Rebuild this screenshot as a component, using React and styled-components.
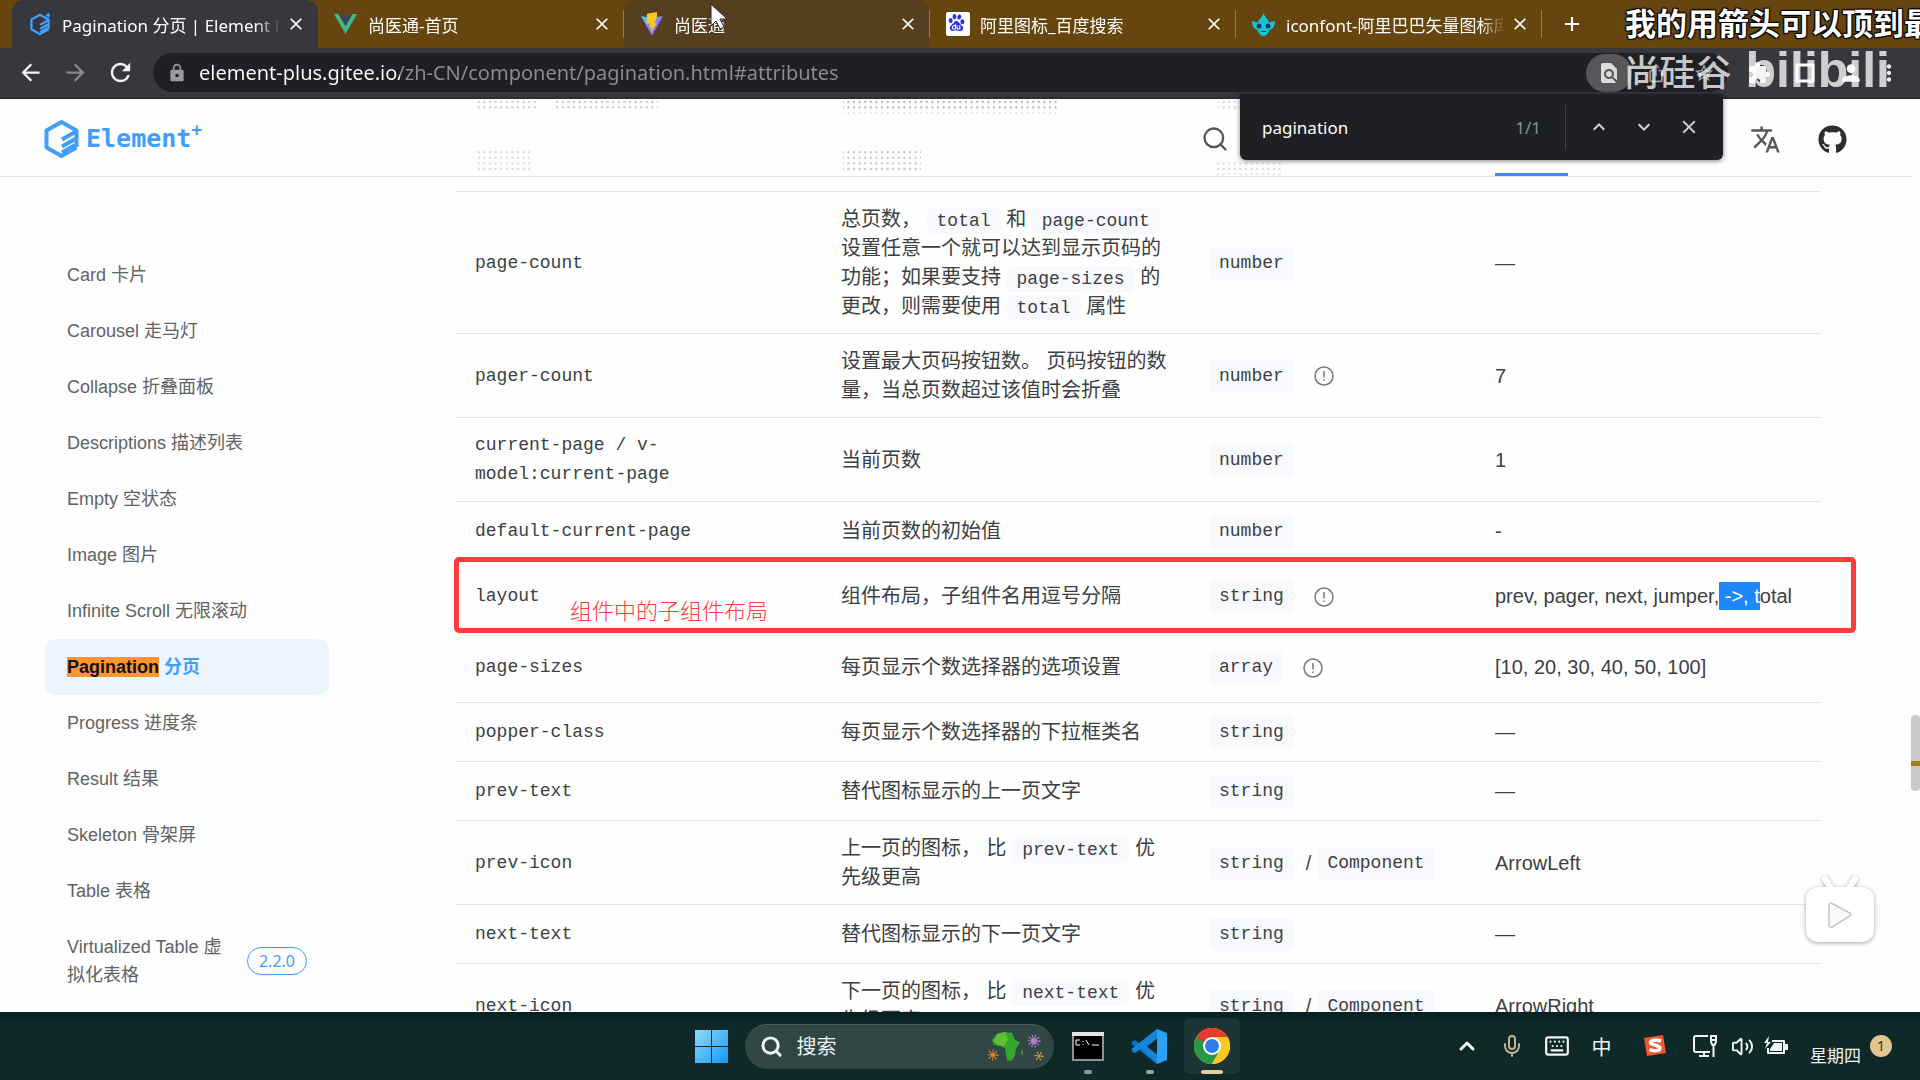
import React from 'react';
import styled, { createGlobalStyle } from 'styled-components';
import {
    MdAdd,
    MdArrowBack,
    MdArrowForward,
    MdClose,
    MdExtension,
    MdFindInPage,
    MdIosShare,
    MdKeyboardArrowDown,
    MdKeyboardArrowUp,
    MdLock,
    MdMoreVert,
    MdPerson,
    MdRefresh,
    MdStarBorder,
    MdTranslate,
} from 'react-icons/md';
import { FaGithub } from 'react-icons/fa';
import { SiBaidu } from 'react-icons/si';
import { ChevronUp, Keyboard, Mic, Search, Volume2 } from 'lucide-react';

const sans = '"Liberation Sans", "Noto Sans CJK SC", sans-serif';
const ui = '"Noto Sans", "Noto Sans CJK SC", sans-serif';
const mono = '"Liberation Mono", "Noto Sans CJK SC", monospace';

const GlobalStyle = createGlobalStyle`
    * {
        box-sizing: border-box;
    }

    body {
        margin: 0;
        overflow: hidden;
        font-family: ${sans};
        color: #3c3f44;
    }

    button {
        padding: 0;
        border: 0;
        background: none;
        color: inherit;
        font: inherit;
    }

    input {
        min-width: 0;
        padding: 0;
        border: 0;
        outline: 0;
        background: none;
        font: inherit;
    }

    a {
        color: inherit;
        text-decoration: none;
    }
`;

const Screen = styled.div`
    display: flex;
    flex-direction: column;
    height: 100vh;
    overflow: hidden;
    position: relative;
    background: #fefefe;
`;

/* browser chrome */

const TabStrip = styled.nav`
    display: flex;
    flex: none;
    height: 48px;
    padding-left: 12px;
    background: #67450f;
    color: #fff;
    font-family: ${ui};
    font-size: 17px;
`;

const Tab = styled.div`
    display: flex;
    align-items: center;
    flex: 0 1 306px;
    min-width: 0;
    padding: 0 12px 0 15px;
    border-radius: 12px 12px 0 0;
    background: ${props => props.$active ? '#37383d' : props.$hovered ? '#563f1e' : 'transparent'};
`;

const TabDivider = styled.div`
    align-self: center;
    width: 1px;
    height: 28px;
    margin-left: -1px;
    background: #957b53;
`;

const TabTitle = styled.button`
    display: flex;
    align-items: center;
    gap: 10px;
    flex: 1;
    min-width: 0;
    overflow: hidden;
    white-space: nowrap;
    mask-image: linear-gradient(to right, #000 88%, transparent 98%);
`;

const TabIcon = styled.span`
    display: flex;
    flex: none;
    width: 25px;
    justify-content: center;
`;

const IconButton = styled.button`
    display: flex;
    align-items: center;
    justify-content: center;
    flex: none;
    width: ${props => props.$width || 24}px;
    height: ${props => props.$width || 24}px;
    color: ${props => props.$color || 'inherit'};
    font-size: ${props => props.$size || 20}px;
`;

const NewTab = styled(IconButton)`
    align-self: center;
    margin-left: 18px;
`;

const Toolbar = styled.div`
    display: flex;
    align-items: center;
    flex: none;
    height: 51px;
    padding: 0 16px 0 8px;
    background: #37383d;
    color: #f4f4f4;
    border-bottom: 2px solid #2b2c30;
`;

const Omnibox = styled.div`
    display: flex;
    align-items: center;
    flex: 1;
    height: 39px;
    margin: 0 8px 0 10px;
    padding-left: 14px;
    border-radius: 20px;
    background: #1f2023;
    color: #9a9c9f;
`;

const Address = styled.input`
    flex: 1;
    margin-left: 12px;
    font-family: ${ui};
    font-size: 20px;
    color: transparent;
    background: linear-gradient(to right, #fff 201px, #8b8d90 201px);
    background-clip: text;
    -webkit-background-clip: text;
`;

const FindBadge = styled.span`
    display: flex;
    align-items: center;
    justify-content: center;
    width: 46px;
    height: 38px;
    border-radius: 19px;
    background: #55575a;
    color: #dcdcdc;
`;

const FindBar = styled.form`
    position: absolute;
    top: 94px;
    right: 197px;
    display: flex;
    align-items: center;
    width: 483px;
    height: 66px;
    padding: 0 22px;
    border-radius: 0 0 6px 6px;
    background: #1f2023;
    box-shadow: 0 1px 5px rgba(0, 0, 0, 0.5);
    color: #d4d4d4;
    font-family: ${ui};
    font-size: 17px;
`;

const FindInput = styled.input`
    flex: 1;
    color: #fff;
`;

const FindCount = styled.span`
    padding-right: 24px;
    color: #8e9093;
`;

const FindActions = styled.div`
    display: flex;
    align-items: center;
    gap: 21px;
    height: 45px;
    padding-left: 21px;
    border-left: 1px solid #3f4144;
`;

/* documentation page */

const Viewport = styled.div`
    display: flex;
    flex: 1;
    min-height: 0;
    overflow: hidden;
`;

const Page = styled.div`
    flex: 1;
    min-width: 0;
`;

const Header = styled.header`
    position: relative;
    display: flex;
    align-items: center;
    height: 78px;
    padding: 3px 64px 0 44px;
    border-bottom: 1px solid #dfe0e3;
    overflow: hidden;
`;

const Dots = styled.svg`
    position: absolute;
    inset: 0;
    width: 100%;
    height: 100%;
`;

const Logo = styled.a`
    display: flex;
    align-items: center;
    gap: 7px;
    margin-right: auto;
    color: #409eff;
    font-family: "DejaVu Sans Mono", monospace;
    font-size: 25px;
    font-weight: bold;
    line-height: 40px;
`;

const LogoPlus = styled.sup`
    align-self: flex-start;
    margin-left: -7px;
    font-size: 18px;
    line-height: 22px;
`;

const HeaderTools = styled.div`
    display: flex;
    align-items: center;
    gap: 36px;
    margin-left: 519px;
    color: #2c2d30;
`;

const ActiveMark = styled.span`
    position: absolute;
    right: 343px;
    bottom: 0;
    width: 73px;
    height: 3px;
    background: #3b8ceb;
`;

const Content = styled.div`
    display: flex;
    align-items: flex-start;
`;

const Sidebar = styled.nav`
    flex: none;
    width: 284px;
    margin: 70px 127px 0 45px;
    font-size: 18px;
    line-height: 28px;
    color: #606266;
`;

const SideLink = styled.a`
    display: flex;
    align-items: center;
    gap: 20px;
    padding: 14px 22px;
    border-radius: 10px;
    ${props => props.$active && `
        background: #ecf5ff;
        color: #409eff;
        font-weight: bold;
    `}
`;

const SideText = styled.span`
    max-width: ${props => props.$wide ? 'none' : '162px'};
`;

const Found = styled.mark`
    background: #ff9632;
    color: #111;
`;

const Version = styled.span`
    flex: none;
    padding: 0 11px;
    border: 1px solid #409eff;
    border-radius: 14px;
    color: #409eff;
    font-family: ${ui};
    font-size: 16px;
    line-height: 26px;
`;

const Main = styled.main`
    flex: 1;
    min-width: 0;
    padding: 14px 90px 0 0;
`;

const Table = styled.table`
    width: 100%;
    table-layout: fixed;
    border-collapse: separate;
    border-spacing: 0;
    border-top: 1px solid #e4e5e8;
    font-size: 20px;
    line-height: 29px;
`;

const Row = styled.tr`
    position: relative;
`;

const Cell = styled.td`
    height: ${props => props.$tall ? 71 : 59}px;
    padding: 13px 19px 12px;
    border-bottom: 1px solid #e4e5e8;
    vertical-align: middle;
    font-family: ${props => props.$mono ? mono : sans};
    font-size: ${props => props.$mono ? 18 : 20}px;
`;

const Chip = styled.code`
    padding: 3px 10px;
    border-radius: 5px;
    background: #f8f9fd;
    font-family: ${mono};
    font-size: 18px;
    line-height: 20px;
`;

const TypeChip = styled(Chip)`
    padding: 2px 10px;
    line-height: 29px;
`;

const Types = styled.div`
    display: flex;
    align-items: center;
`;

const Slash = styled.span`
    margin: 0 6px 0 12px;
`;

const TypeInfo = styled.button`
    display: flex;
    margin-left: 20px;
    color: #77797d;
`;

const Selected = styled.span`
    background: #1e87fb;
    color: #fff;
    padding: 3px 0;
`;

const Annotation = styled.div`
    position: absolute;
    top: -4px;
    right: -35px;
    bottom: -1px;
    left: -2px;
    padding: 33px 0 0 111px;
    border: 5px solid #ff3b3b;
    border-radius: 5px;
    color: #ff3b3b;
    font-family: "Noto Sans CJK SC", sans-serif;
    font-size: 22px;
    font-weight: 300;
    line-height: 28px;
`;

const Scrollbar = styled.div`
    flex: none;
    width: 9px;
    padding-top: 616px;
`;

const Thumb = styled.div`
    height: 76px;
    padding-top: 46px;
    border-radius: 4px;
    background: #c9c9ca;
`;

const MatchTick = styled.div`
    height: 5px;
    background: #a3801f;
`;

/* desktop */

const Taskbar = styled.footer`
    display: grid;
    grid-template-columns: 1fr auto 1fr;
    align-items: center;
    flex: none;
    height: 68px;
    padding-left: 14px;
    background: linear-gradient(#04201f, #0f2828 10px);
    color: #f2f5f5;
    font-family: ${ui};
`;

const Apps = styled.div`
    grid-column: 2;
    display: flex;
    align-items: center;
    gap: 6px;
`;

const StartButton = styled.button`
    display: flex;
`;

const SearchBox = styled.label`
    display: flex;
    align-items: center;
    gap: 14px;
    width: 309px;
    height: 45px;
    margin-left: 11px;
    padding: 0 8px 0 15px;
    border-radius: 23px;
    border-top: 1px solid #4a5f5e;
    background: #314746;
    font-size: 20px;

    input {
        flex: 1;
        color: #eef2f2;
    }

    input::placeholder {
        color: #eef2f2;
        opacity: 1;
    }
`;

const AppButton = styled.button`
    position: relative;
    display: flex;
    align-items: center;
    justify-content: center;
    width: 56px;
    height: 56px;
    border-radius: 6px;
    background: ${props => props.$open ? '#1e3535' : 'transparent'};

    &::after {
        content: '';
        position: absolute;
        bottom: 0;
        width: ${props => props.$open ? 22 : 8}px;
        height: 4px;
        border-radius: 2px;
        background: ${props => props.$open ? '#e3cf9b' : '#8fa3a2'};
    }
`;

const Tray = styled.div`
    grid-column: 3;
    display: flex;
    align-items: center;
    justify-content: flex-end;
    padding-right: 28px;
`;

const TrayButton = styled.button`
    display: flex;
    align-items: center;
    justify-content: center;
    width: ${props => props.$width || 45}px;
    height: 40px;
    color: ${props => props.$color || '#f2f5f5'};
    font-size: 20px;
`;

const Clock = styled.span`
    padding: 20px 0 0 17px;
    font-size: 17px;
    line-height: 24px;
`;

const Notice = styled.button`
    width: 22px;
    height: 22px;
    margin-left: 9px;
    border-radius: 11px;
    background: #e0c690;
    color: #3a3222;
    font-size: 14px;
    line-height: 22px;
`;

/* video overlays */

const Caption = styled.div`
    position: absolute;
    top: 0;
    left: calc(100% - 295px);
    color: #fff;
    font-family: "Noto Sans CJK SC", sans-serif;
    font-size: 31px;
    font-weight: bold;
    line-height: 44px;
    white-space: nowrap;
    text-shadow: 1px 1px 1px #000, -1px -1px 1px #000, 1px -1px 1px #000, -1px 1px 1px #000;
`;

const Watermark = styled.div`
    position: absolute;
    top: 40px;
    right: 30px;
    display: flex;
    align-items: center;
    gap: 14px;
    color: rgba(255, 255, 255, 0.76);
    font-family: "Noto Sans CJK SC", sans-serif;
    font-size: 36px;
    font-weight: 500;
    line-height: 60px;
`;

const WatermarkLogo = styled.span`
    font-family: ${sans};
    font-size: 50px;
    font-weight: bold;
`;

const Pointer = styled.svg`
    position: absolute;
    top: 2px;
    left: 709px;
`;

const Player = styled.button`
    position: absolute;
    right: 40px;
    bottom: 132px;
    display: flex;
`;

const ElementMark = ({ size, plus }) => (
    <svg width={size} height={size * 40 / 35} viewBox="0 0 35 40" fill="none" stroke="#409eff">
        <path d="M32.5 28V11.5L17.5 3 2.5 11.5v17L17.5 37l15-8.5" strokeWidth="4" strokeLinejoin="round" />
        <path d="M18 20.5l14-8M18 27.5l14-8M18 33.5l13-7.5" strokeWidth="4" />
        {plus && <path d="M32 0v8M28 4h8" strokeWidth="3" />}
    </svg>
);

const VueMark = () => (
    <svg width="23" height="20" viewBox="0 0 23 20">
        <path d="M0 0h4.600L11.500 12 18.400 0H23L11.500 20z" fill="#41b883" />
        <path d="M4.600 0h4.200L11.500 4.700 14.200 0h4.200L11.500 12z" fill="#35495e" />
    </svg>
);

const ViteMark = () => (
    <svg width="24" height="24" viewBox="0 0 24 24">
        <defs>
            <linearGradient id="vite-body" x1="0" y1="0" x2="1" y2="1">
                <stop offset="0" stopColor="#41d1ff" />
                <stop offset="1" stopColor="#bd34fe" />
            </linearGradient>
        </defs>
        <path d="M1 4l11 20L23 4l-11 2z" fill="url(#vite-body)" />
        <path d="M17 0L7 1.700 6.500 12l3.300-.6-.7 4.200 2.600-.6-1 6.500 6-10.600-2.600.4 3-6.300z" fill="#ffc81f" />
    </svg>
);

const BaiduMark = () => (
    <svg width="24" height="24" viewBox="0 0 24 24">
        <rect width="24" height="24" rx="2" fill="#fff" />
        <SiBaidu x="2" y="2" width="20" height="20" color="#2932e1" />
    </svg>
);

const IconfontMark = () => (
    <svg width="23" height="23" viewBox="0 0 23 23">
        <path d="M11.500 0C13 5 16 5.500 17 9.500l6-1.500c0 5-2 8-5.500 9-1 3.500-3.500 6-6 6s-5-2.500-6-6C2 16 0 13 0 8l6 1.500C7 5.500 10 5 11.500 0z" fill="#16c4d8" />
        <circle cx="7" cy="13" r="2.500" fill="#0b3a63" />
        <circle cx="16" cy="13" r="2.500" fill="#0b3a63" />
        <path d="M9 18.500h5" stroke="#0b3a63" />
    </svg>
);

const WindowsMark = () => (
    <svg width="33" height="33" viewBox="0 0 33 33">
        <defs>
            <linearGradient id="win" x1="0" y1="0" x2="1" y2="1">
                <stop offset="0" stopColor="#8fdcff" />
                <stop offset="1" stopColor="#1397f0" />
            </linearGradient>
        </defs>
        <path d="M0 0h16v16H0zM17 0h16v16H17zM0 17h16v16H0zM17 17h16v16H17z" fill="url(#win)" />
    </svg>
);

const Virus = ({ x, y, r, color }) => (
    <g stroke={color} fill={color}>
        <circle cx={x} cy={y} r={r} strokeDasharray="1 2" fill="none" strokeWidth="3" />
        <circle cx={x} cy={y} r={r - 2} />
    </g>
);

const SearchArt = () => (
    <svg width="58" height="32" viewBox="0 0 58 32">
        <path d="M9 3l8-2 7 1 3 7 5 2-4 7-1 7-4 5-4-1-2-12-5-2-6-1-2-5z" fill="#35a82c" />
        <path d="M9 3l8-2 3 8-4 6-6-1-4-4z" fill="#61c02f" />
        <path d="M33 20l2-1v4l-2 1z" fill="#2f9b2a" />
        <Virus x={5} y={24} r={4} color="#e8842a" />
        <Virus x={46} y={10} r={5} color="#b87cc4" />
        <Virus x={51} y={25} r={3} color="#d9a52e" />
    </svg>
);

const TerminalMark = () => (
    <svg width="32" height="29" viewBox="0 0 32 29">
        <rect x="1" y="1" width="30" height="27" fill="#000" stroke="#8c9494" strokeWidth="2" />
        <path d="M0 2h32" stroke="#dfe3e3" strokeWidth="4" />
        <path d="M8 8H4v5h4M11 9v1M11 12v1M14 8l3 5M20 13h7" stroke="#fff" fill="none" />
    </svg>
);

const CodeMark = () => (
    <svg width="35" height="35" viewBox="0 0 35 35">
        <path d="M25 0L9 15.500 3 11 0 12.500v3L25 35z" fill="#0a6fc2" />
        <path d="M25 35L9 19.500 3 24l-3-1.500v-3L25 0z" fill="#1684d8" />
        <path d="M25 9.500L15 17.500l10 8z" fill="#0f2828" />
        <path d="M25 0l10 4v27l-10 4z" fill="#2ba1f3" />
    </svg>
);

const ChromeMark = () => (
    <svg width="36" height="36" viewBox="0 0 36 36">
        <circle cx="18" cy="18" r="18" fill="#fbc924" />
        <path d="M18 18L2.400 9A18 18 0 0 1 33.600 9z" fill="#e33b2e" />
        <path d="M2.400 9A18 18 0 0 0 18 36l7.800-13.500L18 18z" fill="#279847" />
        <path d="M18 9h15.600A18 18 0 0 1 18 36l7.800-13.500z" fill="#fbc924" />
        <path d="M2.400 9L10.200 22.500 18 9z" fill="#e33b2e" />
        <path d="M2.400 9l7.800 13.500 4 2L10 14z" fill="#279847" />
        <circle cx="18" cy="18" r="9" fill="#fff" />
        <circle cx="18" cy="18" r="7" fill="#2f7de9" />
    </svg>
);

const SogouMark = () => (
    <svg width="24" height="24" viewBox="0 0 24 24">
        <path d="M1 4l19-3 3 18-19 3z" fill="#f0592b" />
        <path d="M18 7c-4-1.500-10-1-10.500 1.500S17 11 17 14s-6 3.500-10.500 1.500" fill="none" stroke="#fff" strokeWidth="3.500" />
    </svg>
);

const NetworkMark = () => (
    <svg width="24" height="24" viewBox="0 0 24 24" fill="none" stroke="#f2f5f5" strokeWidth="2">
        <path d="M15 2H3a2 2 0 0 0-2 2v12a2 2 0 0 0 2 2h14M6 22h10M11 18v4M20.500 11v12" />
        <path d="M18 2h5v6l-1.500 3h-2L18 8zM18 6h5" />
    </svg>
);

const BatteryMark = () => (
    <svg width="24" height="20" viewBox="0 0 24 20">
        <path d="M8 5h12v12H4v-5" fill="none" stroke="#f2f5f5" strokeWidth="2" strokeLinejoin="round" />
        <path d="M10 7h8v8H6v-2zM21 8h3v6h-3zM5 0L0 7h3l-2 6 6-7H4z" fill="#f2f5f5" />
    </svg>
);

const InfoMark = () => (
    <svg width="20" height="20" viewBox="0 0 20 20" fill="none" stroke="currentColor" strokeWidth="1.500">
        <circle cx="10" cy="10" r="9" />
        <path d="M10 5v6.500M10 13.500v1.500" />
    </svg>
);

const PlayerMark = () => (
    <svg width="80" height="76" viewBox="0 0 80 76">
        <g filter="drop-shadow(0 1px 2px rgba(0, 0, 0, 0.35))">
            <path d="M25 7l6 9M55 7l-6 9" stroke="#fff" strokeWidth="6" strokeLinecap="round" />
            <rect x="6" y="15" width="68" height="55" rx="12" fill="#fff" />
        </g>
        <path d="M31 31l19 10a2 2 0 0 1 0 3L32 55a2 2 0 0 1-3-2V33a2 2 0 0 1 2-2z" fill="#fafafa" stroke="#c6c6c8" strokeWidth="1.500" />
    </svg>
);

/* dotted traces of the rows that scroll under the header */
const HeaderDots = () => (
    <Dots aria-hidden="true">
        <defs>
            <pattern id="dots" width="5.600" height="5.600" patternUnits="userSpaceOnUse">
                <circle cx="2.800" cy="2.800" r="1.100" fill="#8d8f93" />
            </pattern>
        </defs>
        <g fill="url(#dots)">
            <rect x="476" y="1" width="62" height="10" opacity="0.500" />
            <rect x="554" y="1" width="104" height="10" opacity="0.550" />
            <rect x="843" y="0" width="216" height="11" opacity="0.700" />
            <rect x="843" y="11" width="216" height="6" opacity="0.250" />
            <rect x="1218" y="1" width="80" height="10" opacity="0.400" />
            <rect x="474" y="50" width="56" height="22" opacity="0.350" />
            <rect x="843" y="50" width="78" height="22" opacity="0.550" />
            <rect x="1216" y="62" width="68" height="14" opacity="0.350" />
        </g>
    </Dots>
);

const tabs = [
    { title: 'Pagination 分页 | Element Plus', icon: <ElementMark size={20} plus />, active: true },
    { title: '尚医通-首页', icon: <VueMark /> },
    { title: '尚医通', icon: <ViteMark />, hovered: true, divided: true },
    { title: '阿里图标_百度搜索', icon: <BaiduMark />, divided: true },
    { title: 'iconfont-阿里巴巴矢量图标库', icon: <IconfontMark />, divided: true },
];

const links = [
    'Card 卡片',
    'Carousel 走马灯',
    'Collapse 折叠面板',
    'Descriptions 描述列表',
    'Empty 空状态',
    'Image 图片',
    'Infinite Scroll 无限滚动',
    'Pagination 分页',
    'Progress 进度条',
    'Result 结果',
    'Skeleton 骨架屏',
    'Table 表格',
];

const rows = [
    {
        name: 'page-count',
        description: (
            <>
                总页数， <Chip>total</Chip> 和 <Chip>page-count</Chip> 设置任意一个就可以达到显示页码的功能；如果要支持{' '}
                <Chip>page-sizes</Chip> 的更改，则需要使用 <Chip>total</Chip> 属性
            </>
        ),
        types: ['number'],
        value: '—',
    },
    { name: 'pager-count', description: '设置最大页码按钮数。 页码按钮的数量，当总页数超过该值时会折叠', types: ['number'], info: true, value: '7' },
    { name: 'current-page / v-model:current-page', description: '当前页数', types: ['number'], value: '1' },
    { name: 'default-current-page', description: '当前页数的初始值', types: ['number'], value: '-' },
    {
        name: 'layout',
        description: '组件布局，子组件名用逗号分隔',
        types: ['string'],
        info: true,
        value: <>prev, pager, next, jumper,<Selected> -&gt;, t</Selected>otal</>,
        note: '组件中的子组件布局',
    },
    { name: 'page-sizes', description: '每页显示个数选择器的选项设置', types: ['array'], info: true, value: '[10, 20, 30, 40, 50, 100]' },
    { name: 'popper-class', description: '每页显示个数选择器的下拉框类名', types: ['string'], value: '—' },
    { name: 'prev-text', description: '替代图标显示的上一页文字', types: ['string'], value: '—' },
    { name: 'prev-icon', description: <>上一页的图标， 比 <Chip>prev-text</Chip> 优先级更高</>, types: ['string', 'Component'], value: 'ArrowLeft' },
    { name: 'next-text', description: '替代图标显示的下一页文字', types: ['string'], value: '—' },
    { name: 'next-icon', description: <>下一页的图标， 比 <Chip>next-text</Chip> 优先级更高</>, types: ['string', 'Component'], value: 'ArrowRight' },
];

const BrowserTab = ({ title, icon, active, hovered, divided }) => (
    <>
        {divided && <TabDivider />}
        <Tab $active={active} $hovered={hovered}>
            <TabTitle>
                <TabIcon>{icon}</TabIcon>
                {title}
            </TabTitle>
            <IconButton aria-label="关闭标签页" $width={20}><MdClose /></IconButton>
        </Tab>
    </>
);

const AttributeRow = ({ name, description, types, info, value, note }) => (
    <Row>
        <Cell $mono $tall={info}>
            {name}
            {note && <Annotation>{note}</Annotation>}
        </Cell>
        <Cell>{description}</Cell>
        <Cell>
            <Types>
                {types.map((type, index) => (
                    <React.Fragment key={type}>
                        {index > 0 && <Slash>/</Slash>}
                        <TypeChip>{type}</TypeChip>
                    </React.Fragment>
                ))}
                {info && <TypeInfo aria-label="类型详情"><InfoMark /></TypeInfo>}
            </Types>
        </Cell>
        <Cell>{value}</Cell>
    </Row>
);

const App = () => (
    <Screen>
        <GlobalStyle />
        <TabStrip>
            {tabs.map(tab => <BrowserTab key={tab.title} {...tab} />)}
            <TabDivider />
            <NewTab aria-label="新标签页" $size={26}><MdAdd /></NewTab>
        </TabStrip>
        <Toolbar>
            <IconButton aria-label="后退" $width={45} $size={27}><MdArrowBack /></IconButton>
            <IconButton aria-label="前进" $width={45} $size={27} $color="#86888b"><MdArrowForward /></IconButton>
            <IconButton aria-label="刷新" $width={45} $size={29}><MdRefresh /></IconButton>
            <Omnibox>
                <MdLock size={20} />
                <Address aria-label="地址" defaultValue="element-plus.gitee.io/zh-CN/component/pagination.html#attributes" />
                <FindBadge><MdFindInPage size={24} /></FindBadge>
                <IconButton aria-label="分享" $width={48}><MdIosShare /></IconButton>
                <IconButton aria-label="收藏" $width={48} $size={22}><MdStarBorder /></IconButton>
            </Omnibox>
            <IconButton aria-label="扩展程序" $width={46} $size={24}><MdExtension /></IconButton>
            <IconButton aria-label="侧边栏" $width={46}>
                <svg width="20" height="20" viewBox="0 0 20 20"><path d="M2 2h16v16H2z" fill="none" stroke="#fff" strokeWidth="3" /></svg>
            </IconButton>
            <IconButton aria-label="用户" $width={46} $size={26}><MdPerson /></IconButton>
            <IconButton aria-label="更多" $width={30} $size={26}><MdMoreVert /></IconButton>
        </Toolbar>

        <Viewport>
            <Page>
                <Header>
                    <HeaderDots />
                    <Logo href="#home">
                        <ElementMark size={35} />
                        Element
                        <LogoPlus>+</LogoPlus>
                    </Logo>
                    <IconButton aria-label="搜索" $width={28} $color="#55575b"><Search size={28} strokeWidth={2} /></IconButton>
                    <HeaderTools>
                        <IconButton aria-label="语言" $width={34} $size={31} $color="#55575b"><MdTranslate /></IconButton>
                        <IconButton as="a" href="#github" aria-label="GitHub" $width={29} $size={29}><FaGithub /></IconButton>
                    </HeaderTools>
                    <ActiveMark />
                </Header>
                <Content>
                    <Sidebar>
                        {links.map(link => {
                            const active = link.startsWith('Pagination');

                            return (
                                <SideLink key={link} href="#component" $active={active}>
                                    <SideText $wide>
                                        {active ? <><Found>Pagination</Found> 分页</> : link}
                                    </SideText>
                                </SideLink>
                            );
                        })}
                        <SideLink href="#component">
                            <SideText>Virtualized Table 虚拟化表格</SideText>
                            <Version>2.2.0</Version>
                        </SideLink>
                    </Sidebar>
                    <Main>
                        <Table>
                            <colgroup>
                                <col width="366" />
                                <col width="368" />
                                <col width="286" />
                                <col />
                            </colgroup>
                            <tbody>
                                {rows.map(row => <AttributeRow key={row.name} {...row} />)}
                            </tbody>
                        </Table>
                    </Main>
                </Content>
            </Page>
            <Scrollbar>
                <Thumb><MatchTick /></Thumb>
            </Scrollbar>
        </Viewport>

        <Taskbar>
            <Apps>
                <StartButton aria-label="开始"><WindowsMark /></StartButton>
                <SearchBox>
                    <Search size={23} strokeWidth={3} />
                    <input aria-label="搜索" placeholder="搜索" />
                    <SearchArt />
                </SearchBox>
                <AppButton aria-label="终端"><TerminalMark /></AppButton>
                <AppButton aria-label="Visual Studio Code"><CodeMark /></AppButton>
                <AppButton aria-label="Chrome" $open><ChromeMark /></AppButton>
            </Apps>
            <Tray>
                <TrayButton aria-label="显示隐藏的图标"><ChevronUp size={24} strokeWidth={3} /></TrayButton>
                <TrayButton aria-label="麦克风" $color="#bdb58d"><Mic size={24} /></TrayButton>
                <TrayButton aria-label="触摸键盘"><Keyboard size={26} /></TrayButton>
                <TrayButton>中</TrayButton>
                <TrayButton aria-label="输入法" $width={61}><SogouMark /></TrayButton>
                <TrayButton aria-label="网络" $width={40}><NetworkMark /></TrayButton>
                <TrayButton aria-label="音量" $width={34}><Volume2 size={23} /></TrayButton>
                <TrayButton aria-label="电池" $width={34}><BatteryMark /></TrayButton>
                <Clock>星期四</Clock>
                <Notice>1</Notice>
            </Tray>
        </Taskbar>

        <FindBar>
            <FindInput aria-label="查找" defaultValue="pagination" />
            <FindCount>1/1</FindCount>
            <FindActions>
                <IconButton type="button" aria-label="上一个" $size={24}><MdKeyboardArrowUp /></IconButton>
                <IconButton type="button" aria-label="下一个" $size={24}><MdKeyboardArrowDown /></IconButton>
                <IconButton type="button" aria-label="关闭查找" $size={22}><MdClose /></IconButton>
            </FindActions>
        </FindBar>
        <Caption>我的用箭头可以顶到最</Caption>
        <Watermark>
            尚硅谷
            <WatermarkLogo>bilibili</WatermarkLogo>
        </Watermark>
        <Player aria-label="播放"><PlayerMark /></Player>
        <Pointer width="20" height="28" viewBox="0 0 20 28">
            <path d="M2 2v22l5-5 4 8 4-2-4-8h7z" fill="#fff" stroke="#222" />
        </Pointer>
    </Screen>
);

export default App;
